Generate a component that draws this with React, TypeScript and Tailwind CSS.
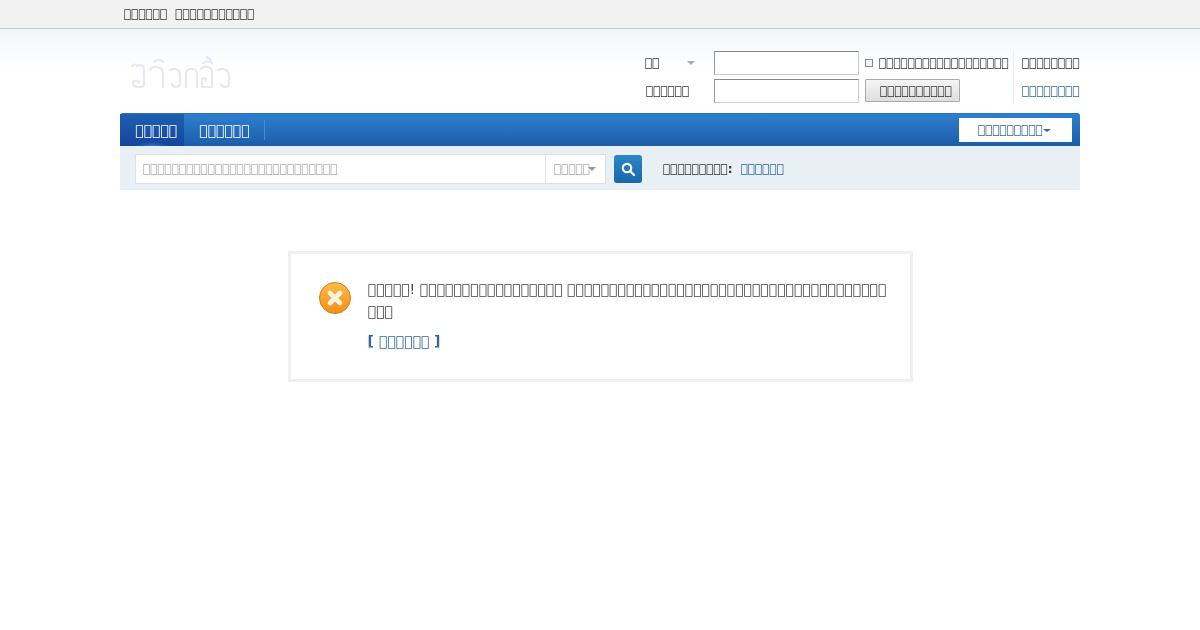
// The reference shows missing-glyph boxes, not legible words, so the original wording cannot be read.
// Text is kept as real text made of the same missing-glyph character rather than invented Thai copy.
const b = (n: number) => "\uFFFE".repeat(n);

export default function App() {
  return (
    <div className="min-h-[630px] whitespace-nowrap font-['DejaVu_Sans',sans-serif] text-[12px] text-[#555] [will-change:transform]">
      <div className="h-[29px] border-b border-[#cdcdcd] bg-[#f2f2f2]">
        <div className="mx-auto flex h-[28px] w-[960px] items-center gap-[8px] pl-1 text-[#333]">
          <span>{b(6)}</span>
          <span>{b(11)}</span>
        </div>
      </div>
      <div className="bg-gradient-to-b from-[#f1f6f9] to-white to-[40px]">
        <div className="mx-auto flex h-[84px] w-[960px] justify-between">
          <div className="pl-[10px] pt-[27px]">
            <svg width="104" height="40" viewBox="0 0 104 40" fill="none" stroke="#e6e8f2" strokeWidth="2.2" strokeLinecap="round" role="img" aria-label="logo">
              <path d="M2 10c2-2 4-2 5 0 3-2 7-1 7 4v15c0 2-3 2-6 2-4 0-6-2-5-5 1-2 5-2 6 0" />
              <path d="M20 14c1-3 3-3 5-3 5 0 8 2 8 6v14M24 6c3-3 8-2 9 0" />
              <path d="M40 14c7-3 10 1 10 5v8c0 5-7 5-8 1" />
              <path d="M56 31V18c0-7 11-7 11 0v13" />
              <path d="M71 13c3-4 11-3 11 3v15H72v-8c2-2 4 0 4 2M73 7c3-2 7-2 9 0M77 1l4 3" />
              <path d="M88 14c7-3 11 1 11 5v8c0 5-7 5-8 1" />
            </svg>
          </div>
          <div className="flex pt-[21px]">
            <div className="flex w-[368px] flex-col gap-[4px] pt-px">
              <div className="flex h-[24px] items-center">
                <span className="flex w-[69px] shrink-0 items-center text-[#333]">
                  {b(2)}
                  <span className="ml-[28px] h-0 w-0 border-x-[4px] border-t-[4px] border-x-transparent border-t-[#aaa]" />
                </span>
                <input className="h-[24px] w-[145px] shrink-0 border border-[#ccc] border-l-[#999] border-t-[#888] bg-white" readOnly />
                <span className="ml-[6px] h-[8px] w-[8px] shrink-0 border border-[#888] bg-[#f4f4f4]" />
                <span className="ml-[6px] text-[#333]">{b(18)}</span>
              </div>
              <div className="flex h-[24px] items-start">
                <span className="w-[69px] shrink-0 self-center pl-px text-[#333]">{b(6)}</span>
                <input className="h-[24px] w-[145px] shrink-0 border border-[#ccc] border-l-[#999] border-t-[#888] bg-white" readOnly />
                <button className="ml-[6px] h-[23px] w-[95px] shrink-0 rounded-[1px] border border-[#aaa] bg-gradient-to-b from-[#f5f5f5] to-[#dedede] pl-[14px] text-left text-[#333]">{b(10)}</button>
              </div>
            </div>
            <div className="flex h-[54px] w-[67px] flex-col justify-between border-l border-[#eee] py-[4px] pl-2">
              <span className="text-[#333]">{b(8)}</span>
              <span className="text-[#336699]">{b(8)}</span>
            </div>
          </div>
        </div>
      </div>
      <div className="mx-auto w-[960px]">
        <div className="flex h-[33px] items-center justify-between rounded-t-[3px] border-t border-[#2a73bf] bg-gradient-to-b from-[#2f7fce] to-[#1c5dab] pr-2 text-[14px] text-white">
          <div className="flex h-full items-center">
            <span className="flex h-full w-[64px] items-center bg-[radial-gradient(ellipse_16px_4px_at_50%_100%,#2f78c8,transparent),linear-gradient(to_bottom,#1e5fb0,#16459f)] pl-[15px]">{b(5)}</span>
            <span className="flex h-[20px] items-center border-r border-[#4c8ad0] pl-[15px] pr-[15px]">{b(6)}</span>
          </div>
          <div className="flex h-[24px] w-[113px] items-center bg-white pl-[19px] text-[12px] text-[#336699]">
            <span>{b(9)}</span>
            <span className="mt-px h-0 w-0 border-x-[4px] border-t-[3px] border-x-transparent border-t-[#336699]" />
          </div>
        </div>
        <div className="flex h-[44px] items-center bg-[#e8eff5] pl-[15px] pt-[2px]">
          <div className="flex h-[30px] w-[471px] border border-[#dcdfe3] bg-white">
            <span className="flex w-[410px] items-center border-r border-[#e3e3e3] pl-[7px] text-[#aaa]">{b(27)}</span>
            <span className="flex flex-1 items-center pl-2 text-[#aaa]">
              {b(5)}
              <span className="-ml-[2px] h-0 w-0 border-x-[4px] border-t-[4px] border-x-transparent border-t-[#999]" />
            </span>
          </div>
          <button className="ml-2 flex h-[28px] w-[28px] items-center justify-center rounded-[3px] bg-gradient-to-b from-[#2a88c8] to-[#1a68a8]">
            <svg width="16" height="16" viewBox="0 0 16 16" fill="none" stroke="white" strokeWidth="2.2" strokeLinecap="round">
              <circle cx="7" cy="7" r="4.2" />
              <path d="M10.5 10.5 14 14" />
            </svg>
          </button>
          <span className="ml-[21px] text-[#333]">
            {b(9)}
            <span className="font-bold">:</span>
          </span>
          <span className="ml-2 text-[#336699]">{b(6)}</span>
        </div>
        <div className="mx-auto mt-[61px] flex h-[131px] w-[625px] border-[3px] border-[#f0f0f0] pl-[27px] pt-[27px]">
          <svg className="shrink-0" width="34" height="34" viewBox="0 0 34 34">
            <defs>
              <linearGradient id="g" x1="0" y1="0" x2="0" y2="1">
                <stop offset="0" stopColor="#fdbb4a" />
                <stop offset="1" stopColor="#f18f16" />
              </linearGradient>
            </defs>
            <circle cx="17" cy="17" r="15.5" fill="url(#g)" stroke="#d67f14" />
            <path d="M12 12l10 10M22 12 12 22" stroke="#fff4df" strokeWidth="4.6" strokeLinecap="round" />
          </svg>
          <div className="-mt-[3px] ml-[16px] w-[520px] whitespace-normal text-[14px] leading-[22px] text-[#444]">
            <p>{b(5)}! {b(17)} {b(38)} {b(3)}</p>
            <p className="mt-[8px] font-bold text-[#336699]">[ {b(6)} ]</p>
          </div>
        </div>
      </div>
    </div>
  );
}
